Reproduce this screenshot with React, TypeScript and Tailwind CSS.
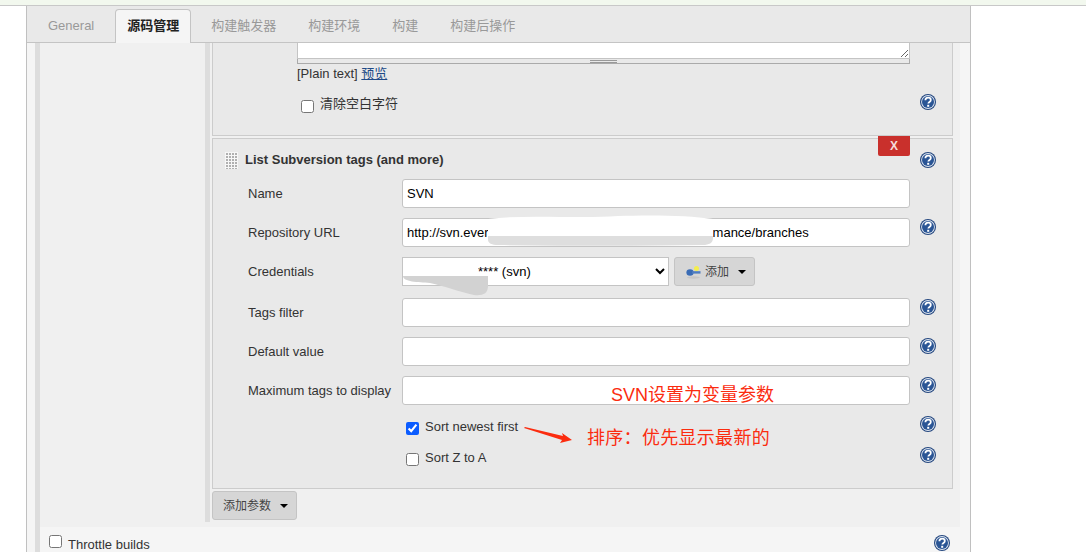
const sans = "font-['Liberation_Sans','Noto_Sans_CJK_SC',sans-serif]"

function HelpIcon({ className = "" }: { className?: string }) {
  return (
    <svg viewBox="0 0 16 16" className={`h-4 w-4 shrink-0 ${className}`}>
      <circle cx="8" cy="8" r="8" fill="#24477f" />
      <circle cx="8" cy="8" r="6.9" fill="#dfe6f0" />
      <circle cx="8" cy="8" r="6" fill="#2a5595" />
      <path d="M5.4 6.2c0-1.7 1.1-2.6 2.7-2.6s2.7.9 2.7 2.3c0 2.1-2.5 2-2.5 3.7" fill="none" stroke="#fff" strokeWidth="1.8" />
      <rect x="7.2" y="10.8" width="2" height="2" fill="#fff" />
    </svg>
  )
}

function Caret() {
  return <span className="h-0 w-0 border-x-[4px] border-t-[4px] border-x-transparent border-t-black" />
}

function Grip() {
  return (
    <svg width="13" height="17" className="mr-[7px] shrink-0">
      <defs>
        <pattern id="dots" width="3" height="3" patternUnits="userSpaceOnUse">
          <rect width="3" height="3" fill="#f7f7f7" />
          <rect x="1" y="1" width="2" height="2" fill="#b0b0b0" />
        </pattern>
      </defs>
      <rect width="13" height="17" fill="url(#dots)" />
    </svg>
  )
}

function KeyIcon() {
  return (
    <svg width="15" height="16" viewBox="0 0 15 16" className="mr-[4px] shrink-0">
      <ellipse cx="7.5" cy="13.5" rx="6.5" ry="1.2" fill="#c6c6c6" />
      <ellipse cx="4" cy="8.5" rx="3.6" ry="3.3" fill="#3a6cb5" />
      <rect x="6" y="7.2" width="8.5" height="2.4" fill="#4d7cc0" />
      <circle cx="10.5" cy="4.5" r="2.5" fill="#f4ee4e" />
    </svg>
  )
}

function FieldRow({ label, value, help = true }: { label: string; value?: string; help?: boolean }) {
  return (
    <div className="mb-[10px] flex h-[29px] pl-[35px]">
      <div className="flex w-[154px] shrink-0 items-center">{label}</div>
      <input
        readOnly
        value={value ?? ""}
        className="h-[29px] w-[508px] rounded-[3px] border border-[#c4c4c4] bg-white px-[4px] text-[13px] text-black"
      />
      {help && <HelpIcon className="ml-[10px] mt-px" />}
    </div>
  )
}

function CheckRow({ label, checked }: { label: string; checked?: boolean }) {
  return (
    <div className="flex h-[31px] pl-[193px]">
      <input type="checkbox" readOnly checked={!!checked} className="mt-[6px] h-[13px] w-[13px] accent-[#0b5cff]" />
      <span className="ml-[6px] mt-[3px] w-[495px] leading-[15px]">{label}</span>
      <HelpIcon />
    </div>
  )
}

export default function App() {
  const tabs = ["General", "源码管理", "构建触发器", "构建环境", "构建", "构建后操作"]

  return (
    <div className={`relative h-[552px] overflow-hidden bg-white text-[13px] text-[#333] ${sans}`}>
      <div className="h-[6px] border-b border-[#c8c8c8] bg-[#f2f8ee]" />
      <div className="ml-[26px] flex h-[546px] w-[945px] flex-col border-x border-[#c0c0c0] bg-[#f5f5f5]">
        <div className="flex h-[37px] shrink-0 items-end gap-[8px] border-b border-[#c4c4c4] bg-[#e9e9e9] pl-[9px]">
          {tabs.map((tab) => (
            <div
              key={tab}
              className={
                tab === "源码管理"
                  ? "relative -mb-px h-[34px] rounded-t-[4px] border border-b-0 border-[#c4c4c4] bg-[#f5f5f5] px-[11px] pt-[6px] font-bold text-[#222]"
                  : tab === "General"
                    ? "mr-px h-[33px] border border-transparent px-[11px] pt-[6px] text-[#999]"
                    : "h-[33px] border border-transparent px-[11px] pt-[6px] text-[#999]"
              }
            >
              {tab}
            </div>
          ))}
        </div>

        <div className="ml-[8px] flex w-[925px] flex-1 flex-col border-l-[5px] border-[#ddd]">
          <div className="flex h-[484px] shrink-0 bg-[#f0f0f0]">
            <div className="w-[165px] shrink-0" />
            <div className="h-[479px] w-[755px] border-l-[5px] border-[#ddd] pl-[2px]">
              <div className="h-[93px] w-[741px] border-x border-b border-[#ccc] bg-[#e9e9e9]">
                <div className="ml-[84px] w-[613px]">
                  <textarea readOnly className="block h-[16px] w-full border-x border-b border-[#c4c4c4] bg-white" />
                  <div className="flex h-[5px] justify-center border-x border-b border-[#aaa]">
                    <div className="mt-px h-[3px] w-[27px] border-y border-[#999]" />
                  </div>
                  <div className="mt-[2px] leading-[15px]">
                    [Plain text]{" "}
                    <a href="#" className="text-[#204a87] underline">
                      预览
                    </a>
                  </div>
                </div>
                <div className="mt-[13px] flex pl-[88px]">
                  <input type="checkbox" readOnly className="mt-[6px] h-[13px] w-[13px]" />
                  <span className="ml-[6px] w-[600px] leading-[19px]">清除空白字符</span>
                  <HelpIcon />
                </div>
              </div>

              <div className="relative mt-[2px] h-[351px] w-[741px] border border-[#ccc] bg-[#e9e9e9]">
                <button className="absolute -top-[3px] left-[665px] h-[20px] w-[32px] rounded-b-[2px] bg-[#c9302c] text-[12px] font-bold text-[#f5dcdc]">
                  X
                </button>
                <div className="flex h-[40px] items-center pl-[12px] pt-[2px]">
                  <Grip />
                  <span className="w-[675px] font-bold">List Subversion tags (and more)</span>
                  <HelpIcon />
                </div>
                <FieldRow label="Name" value="SVN" help={false} />
                <FieldRow label="Repository URL" value="http://svn.ever                                                              mance/branches" />
                <div className="mb-[12px] flex h-[29px] pl-[35px]">
                  <div className="flex w-[154px] shrink-0 items-center">Credentials</div>
                  <select className="h-[29px] w-[267px] border border-[#c4c4c4] bg-white pl-[71px] text-[13px] text-black">
                    <option>**** (svn)</option>
                  </select>
                  <button className="ml-[5px] flex h-[29px] w-[81px] items-center rounded-[3px] border border-[#c4c4c4] bg-[#d6d6d6] pl-[11px] text-[12px] text-[#444]">
                    <KeyIcon />
                    添加
                    <span className="ml-[9px] flex">
                      <Caret />
                    </span>
                  </button>
                </div>
                <FieldRow label="Tags filter" />
                <FieldRow label="Default value" />
                <FieldRow label="Maximum tags to display" />
                <div className="h-px" />
                <CheckRow label="Sort newest first" checked />
                <CheckRow label="Sort Z to A" />
              </div>

              <button className="mt-[2px] flex h-[29px] w-[85px] items-center rounded-[3px] border border-[#c4c4c4] bg-[#d6d6d6] pl-[10px] text-[12px] text-[#444]">
                添加参数
                <span className="ml-[9px] flex">
                  <Caret />
                </span>
              </button>
            </div>
          </div>
          <div className="flex flex-1 pl-[9px] pt-[8px]">
            <input type="checkbox" readOnly className="h-[13px] w-[13px]" />
            <span className="ml-[6px] mt-[2px] w-[866px] leading-[15px]">Throttle builds</span>
            <HelpIcon />
          </div>
        </div>
      </div>

      {/* hand drawn stuff on top of the screenshot */}
      <svg className="pointer-events-none absolute left-0 top-0" width="1086" height="552">
        <path d="M488 219c40-5 90 0 130-3 30-1 70-1 95 3v19c0 5-4 7-10 7-60 1-130 1-205 0-6 0-10-1-10-5z" fill="#fff" />
        <path d="M488 236h225v2c0 5-4 7-10 7-60 1-130 1-205 0-6 0-10-2-10-5z" fill="#dedede" />
        <path d="M403 258h75v6l-2 1h-73z" fill="#fff" />
        <path d="M403 276h85v10c0 8-6 10-14 9-14-3-30-9-44-12-12-1-27-1-27-7z" fill="#d2d2d2" />
        <path d="M524 428l1-1 38 9-1-3 10 7-12 3 2-3z" fill="#fb2c0f" />
      </svg>
      <div className="absolute left-[611px] top-[385px] text-[18px] leading-[21px] text-[#fb2c0f]">SVN设置为变量参数</div>
      <div className="absolute left-[587px] top-[428px] text-[18px] leading-[21px] tracking-[0.3px] text-[#fb2c0f]">排序：优先显示最新的</div>
    </div>
  )
}
